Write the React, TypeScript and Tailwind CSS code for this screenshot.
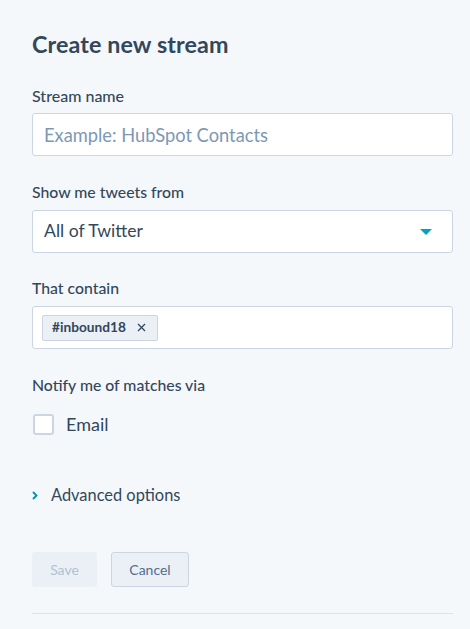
import React, { useState } from 'react';

const font = { fontFamily: 'Lato, "Open Sans", sans-serif' };

export default function App() {
  const [tags, setTags] = useState<string[]>(['#inbound18']);
  const [email, setEmail] = useState(false);

  return (
    <div className="min-h-[629px] bg-[#f5f8fa] text-[#33475b]" style={font}>
      <div className="pl-8 pr-[17px] pt-[28px]">
        <h1 className="text-[23.3px] font-bold leading-[32px] tracking-[0.1px]">Create new stream</h1>

        <div className="mt-[26px]">
          <label className="block text-[16px] font-medium leading-[20px]">Stream name</label>
          <input
            placeholder="Example: HubSpot Contacts"
            className="mt-[7px] h-[43px] w-full rounded-[3px] border border-[#cbd6e2] bg-white px-[11px] text-[18.3px] text-[#33475b] outline-none placeholder:text-[#7c98b6]"
          />
        </div>

        <div className="mt-[26px]">
          <label className="block text-[15.8px] font-medium leading-[20px]">Show me tweets from</label>
          <div className="mt-[8px] flex h-[43px] w-full items-center justify-between rounded-[3px] border border-[#cbd6e2] bg-white pl-[11px] pr-[20px]">
            <span className="text-[17.6px]">All of Twitter</span>
            <svg width="12" height="6" viewBox="0 0 12 6">
              <path d="M0 0h12L6 6z" fill="#00a4bd" />
            </svg>
          </div>
        </div>

        <div className="mt-[25px]">
          <label className="block text-[15.8px] font-medium leading-[20px]">That contain</label>
          <div className="mt-[8px] flex h-[43px] w-full items-center gap-2 rounded-[3px] border border-[#cbd6e2] bg-white px-[9px]">
            {tags.map(t => (
              <span key={t} className="flex h-[26px] items-center gap-[11px] rounded-[2px] border border-[#cbd6e2] bg-[#eaf0f6] pl-[9px] pr-[11px] text-[13.7px] font-bold">
                {t}
                <button onClick={() => setTags(tags.filter(x => x !== t))}>
                  <svg width="9" height="9" viewBox="0 0 9 9" className="block">
                    <path d="M1 1l7 7M8 1l-7 7" stroke="#33475b" strokeWidth="1.3" />
                  </svg>
                </button>
              </span>
            ))}
          </div>
        </div>

        <div className="mt-[26px]">
          <label className="block text-[15.8px] font-medium leading-[20px]">Notify me of matches via</label>
          <label className="mt-[19px] flex cursor-pointer items-center gap-[12px]">
            <span
              onClick={() => setEmail(!email)}
              className="ml-px h-[21px] w-[21px] rounded-[3px] border-2 border-[#cbd6e2] bg-white"
            />
            <span className="text-[18px] leading-[21px]">Email</span>
          </label>
        </div>

        <button className="mt-[50px] flex h-[20px] items-center gap-[13px] text-[16.4px]">
          <svg width="6" height="9" viewBox="0 0 6 9">
            <path d="M1 1l3.5 3.5L1 8" stroke="#0091ae" strokeWidth="1.8" fill="none" />
          </svg>
          Advanced options
        </button>

        <div className="mt-[47px] flex gap-[14px]">
          <button disabled className="h-[35px] w-[65px] rounded-[3px] bg-[#eaf0f6] text-[14px] text-[#b0c1d4]">Save</button>
          <button className="h-[35px] w-[78px] rounded-[3px] border border-[#cbd6e2] bg-[#eaf0f6] text-[14px] text-[#506e91]">Cancel</button>
        </div>

        <div className="mt-[26px] border-t border-[#dfe3eb]" />
      </div>
    </div>
  );
}
